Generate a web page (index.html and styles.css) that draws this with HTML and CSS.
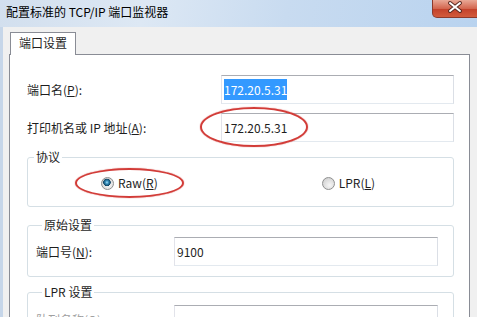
FILE: index.html
```html
<!DOCTYPE html>
<html lang="zh-CN">
<head>
    <meta charset="UTF-8">
    <title>配置标准的 TCP/IP 端口监视器</title>
    <link rel="stylesheet" href="styles.css">
</head>
<body>
    <div class="window">
        <!-- Barre de titre -->
        <div class="titlebar">
            <span class="title">配置标准的 TCP/IP 端口监视器</span>
            <div class="close">
                <svg width="46" height="18" viewBox="0 0 46 18">
                    <path d="M18 4 L28 12 M28 4 L18 12" stroke="#5a2a22" stroke-width="4" stroke-linecap="round"/>
                    <path d="M18 4 L28 12 M28 4 L18 12" stroke="#ffffff" stroke-width="2" stroke-linecap="round"/>
                </svg>
            </div>
        </div>

        <div class="body">
            <div class="tabs">
                <div class="tab">端口设置</div>
            </div>

            <div class="panel">
                <div class="row">
                    <span class="label">端口名(<u>P</u>):</span>
                    <div class="edit"><span class="sel">172.20.5.31</span></div>
                </div>
                <div class="row second">
                    <span class="label">打印机名或 IP 地址(<u>A</u>):</span>
                    <div class="edit">172.20.5.31</div>
                </div>

                <!-- Protocole -->
                <fieldset class="group protocol">
                    <legend>协议</legend>
                    <div class="radios">
                        <span class="radio-item"><span class="radio checked"></span><span>Raw(<u>R</u>)</span></span>
                        <span class="radio-item"><span class="radio"></span><span>LPR(<u>L</u>)</span></span>
                    </div>
                </fieldset>

                <fieldset class="group raw">
                    <legend>原始设置</legend>
                    <div class="row inner">
                        <span class="label short">端口号(<u>N</u>):</span>
                        <div class="edit wide">9100</div>
                    </div>
                </fieldset>

                <fieldset class="group lpr">
                    <legend>LPR 设置</legend>
                    <div class="row inner">
                        <span class="label short disabled">队列名称(<u>Q</u>):</span>
                        <div class="edit wide"></div>
                    </div>
                </fieldset>
            </div>
        </div>

        <!-- Annotations rouges -->
        <div class="mark mark-ip"></div>
        <div class="mark mark-raw"></div>
    </div>
</body>
</html>
```

FILE: styles.css
```css
* {
    box-sizing: border-box;
}

body {
    margin: 0;
    font-family: "Noto Sans CJK SC", "Noto Sans", sans-serif;
    font-size: 12px;
    color: #1e1e1e;
    background-color: #f0f0f0;
    overflow: hidden;
}

.window {
    position: relative;
    width: 477px;
    height: 317px;
    overflow: hidden;
}

.titlebar {
    display: flex;
    height: 27px;
    background: linear-gradient(100deg, #d2dfee 0%, #dde8f4 30%, #c8dbf0 60%, #b9d3ef 100%);
}

.title {
    padding: 4px 0 0 6px;
    line-height: 16px;
    color: #000;
}

.close {
    margin-left: auto;
    width: 46px;
    height: 18px;
    margin-right: -1px;
    border: 1px solid #8c3a2c;
    border-top: none;
    border-radius: 0 0 0 5px;
    background: linear-gradient(#e9a896, #d3664f 50%, #c2402a 51%, #d25b3c);
    overflow: hidden;
}

.close svg {
    display: block;
    margin-top: -1px;
    margin-left: -1px;
}

.body {
    display: flex;
    flex-direction: column;
    height: 290px;
    border-left: 3px solid #c6d6e9;
    padding: 5px 7px 0 6px;
}

.tabs {
    display: flex;
    padding-left: 1px;
}

.tab {
    position: relative;
    z-index: 1;
    height: 23px;
    margin-bottom: -1px;
    padding: 0 8px;
    line-height: 20px;
    background-color: #ffffff;
    border: 1px solid #898c95;
    border-bottom: none;
}

.panel {
    flex: 1;
    background-color: #ffffff;
    border: 1px solid #898c95;
    padding: 20px 15px 0 17px;
}

.row {
    display: flex;
    align-items: center;
    height: 29px;
}

.row.second {
    margin-top: 9px;
}

.label {
    flex: none;
    width: 194px;
    line-height: 16px;
}

.label.short {
    width: 138px;
}

.disabled {
    color: #a0a0a0;
}

.edit {
    width: 233px;
    height: 29px;
    padding: 0 2px;
    line-height: 27px;
    border: 1px solid;
    border-color: #abadb3 #dbdfe6 #e3e9ef #e2e3ea;
    background-color: #ffffff;
}

.edit.wide {
    width: 264px;
}

.sel {
    background-color: #3399ff;
    color: #ffffff;
    padding: 2px 0;
}

.group {
    margin: 7px 0 0;
    padding: 10px 0 15px;
    min-width: 0;
    border: 1px solid #d5dfe5;
    border-radius: 3px;
}

.group legend {
    margin-left: 6px;
    padding: 0 2px;
    line-height: 16px;
}

.group.raw {
    margin-top: 10px;
    padding: 4px 0 10px 8px;
}

.group.lpr {
    padding: 5px 0 10px 8px;
}

.radios {
    display: flex;
    align-items: center;
    height: 16px;
    padding-left: 73px;
    gap: 164px;
}

.radio-item {
    display: flex;
    align-items: center;
    gap: 4px;
    line-height: 16px;
}

.radio {
    width: 13px;
    height: 13px;
    border-radius: 50%;
    border: 1px solid #8e8f8f;
    background: radial-gradient(circle at 60% 65%, #f6f6f6, #d2d2d2 80%);
}

.radio.checked {
    background:
        radial-gradient(circle at 45% 40%, #a8e4fa 0, #3a92c0 1.5px, #0f4463 3.5px, transparent 4px),
        radial-gradient(circle at 60% 65%, #f6f6f6, #d2d2d2 80%);
}

/* Ellipses rouges dessinées par-dessus */
.mark {
    position: absolute;
    border: 2px solid #d23c38;
    border-radius: 50%;
    box-shadow: 0 0 1px #d23c38;
}

.mark-ip {
    left: 200px;
    top: 107px;
    width: 108px;
    height: 40px;
}

.mark-raw {
    left: 75px;
    top: 168px;
    width: 109px;
    height: 30px;
}
```
